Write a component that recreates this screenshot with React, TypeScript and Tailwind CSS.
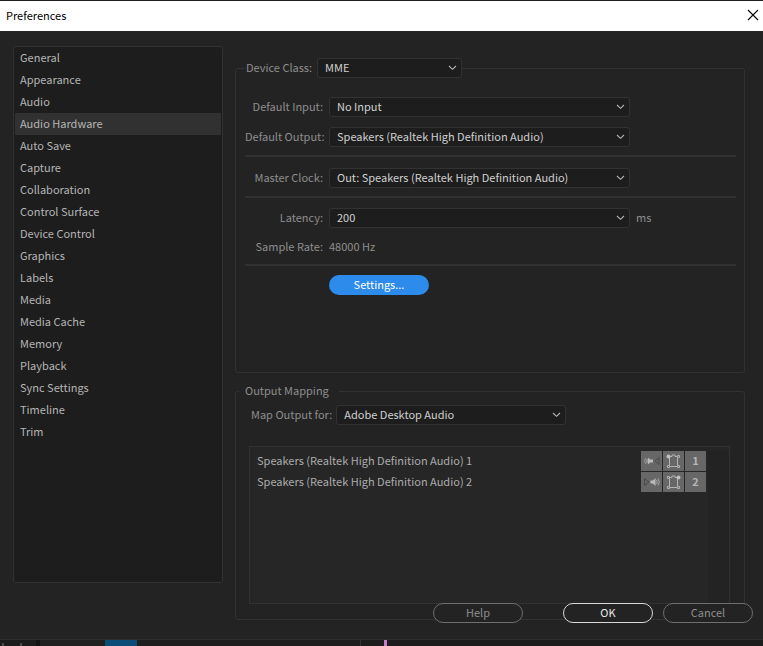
import type { ReactNode } from "react";

const sections = [
  "General",
  "Appearance",
  "Audio",
  "Audio Hardware",
  "Auto Save",
  "Capture",
  "Collaboration",
  "Control Surface",
  "Device Control",
  "Graphics",
  "Labels",
  "Media",
  "Media Cache",
  "Memory",
  "Playback",
  "Sync Settings",
  "Timeline",
  "Trim",
];

const outputs = [
  { channel: 1, side: "left", name: "Speakers (Realtek High Definition Audio) 1" },
  { channel: 2, side: "right", name: "Speakers (Realtek High Definition Audio) 2" },
];

const Dropdown = ({ id, value, className }: { id: string; value: string; className: string }) => (
  <div className={`relative h-5 ${className}`}>
    <select
      id={id}
      className="block h-5 w-full appearance-none rounded-[3px] border border-[#323232] bg-[#1d1d1d] pb-0.5 pl-[7px] pr-6 leading-4 text-[#d0d0d0] outline-none"
    >
      <option>{value}</option>
    </select>
    <svg
      viewBox="0 0 9 6"
      className="pointer-events-none absolute right-[5px] top-[7px] h-[6px] w-[9px]"
      fill="none"
      stroke="#b4b4b4"
      strokeWidth="1.1"
    >
      <path d="M1 1 L4.5 4.3 L8 1" />
    </svg>
  </div>
);

const Row = ({ label, htmlFor, children }: { label: string; htmlFor?: string; children: ReactNode }) => (
  <div className="flex h-5 items-center gap-1.5">
    <label htmlFor={htmlFor} className="w-[78px] shrink-0 whitespace-nowrap pb-0.5 text-right">
      {label}
    </label>
    {children}
  </div>
);

const Divider = () => <hr className="h-0.5 border-0 bg-[#313131]" />;

const SpeakerIcon = ({ side }: { side: string }) =>
  side === "left" ? (
    <svg viewBox="0 0 21 20" className="h-5 w-[21px]">
      <path d="M5 7 Q2 10 5 13" stroke="#9a9a9a" fill="none" />
      <path d="M5 8h2v4H5z" fill="#8c8c8c" />
      <path d="M7 6.5 L9 8.5 H12 V11.5 H9 L7 13.5z" fill="#bcbcbc" />
      <path d="M18 6.5 L14 10 L18 13.5z" stroke="#4a4a4a" fill="none" />
    </svg>
  ) : (
    <svg viewBox="0 0 21 20" className="h-5 w-[21px]">
      <path d="M3.5 6.5 V13.5 L8 10z" stroke="#4a4a4a" fill="none" />
      <path d="M9.5 8.5 H12 L14.5 6 V14 L12 11.5 H9.5z" fill="#bcbcbc" />
      <path d="M15.5 8 Q17 10 15.5 12 M17 6.5 Q19.5 10 17 13.5" stroke="#a8a8a8" fill="none" />
    </svg>
  );

// Surround layout: square with speaker dots, the assigned one is filled larger
const SurroundIcon = ({ side }: { side: string }) => (
  <svg viewBox="0 0 21 20" className="h-5 w-[21px]" fill="none" stroke="#b2b2b2">
    <path d="M6.5 7 V14 M14.5 7 V14 M7 15.5 H14 M7 5.5 H9 M12 5.5 H14" />
    <path d="M9 5.5 V4 H12 V5.5" />
    <path d="M4.5 14.5h2v2h-2z M14.5 14.5h2v2h-2z" />
    {side === "left" ? (
      <>
        <circle cx="5.5" cy="5.5" r="2" fill="#c0c0c0" stroke="none" />
        <path d="M14.5 4.5h2v2h-2z" />
      </>
    ) : (
      <>
        <circle cx="15.5" cy="5.5" r="2" fill="#c0c0c0" stroke="none" />
        <path d="M4.5 4.5h2v2h-2z" />
      </>
    )}
  </svg>
);

const App = () => (
  <div className="flex min-h-screen flex-col bg-[#232323] font-['Noto_Sans_CJK_SC','Noto_Sans',sans-serif] text-[11px] leading-4 text-[#8e8e8e]">
    <header className="flex h-[31px] items-center justify-between border-t border-[#231f20] bg-white pb-0.5 pl-1.5 pr-1 text-black">
      <h1>Preferences</h1>
      <button aria-label="Close" className="flex h-5 w-3 items-center justify-center">
        <svg viewBox="0 0 12 12" className="h-3 w-3" stroke="#000" strokeWidth="1.1">
          <path d="M1 1 L11 11 M11 1 L1 11" />
        </svg>
      </button>
    </header>

    <main className="flex flex-1 gap-3 pl-[13px] pr-[18px] pt-3">
      <nav className="mb-[37px] mt-[3px] w-[210px] shrink-0 rounded-[3px] border border-[#323232] bg-[#1d1d1d]">
        <ul>
          {sections.map((name) => (
            <li key={name} className="px-px">
              <a
                href="#"
                className={`block h-[22px] pl-[5px] leading-5 text-[#b5b5b5] ${
                  name === "Audio Hardware" ? "bg-[#313131]" : ""
                }`}
              >
                {name}
              </a>
            </li>
          ))}
        </ul>
      </nav>

      <div className="flex min-w-0 flex-1 flex-col pt-[15px]">
        <fieldset className="h-[315px] rounded-[3px] border border-[#323232] pl-[9px] pr-2">
          <legend className="flex h-5 items-center gap-[5px] pl-px">
            <label htmlFor="device-class" className="pb-0.5">
              Device Class:
            </label>
            <Dropdown id="device-class" value="MME" className="w-[145px]" />
          </legend>
          <div className="flex flex-col gap-2.5 pt-[19px]">
            <Row label="Default Input:" htmlFor="input">
              <Dropdown id="input" value="No Input" className="w-[301px]" />
            </Row>
            <Row label="Default Output:" htmlFor="output">
              <Dropdown id="output" value="Speakers (Realtek High Definition Audio)" className="w-[301px]" />
            </Row>
          </div>
          <div className="pt-2">
            <Divider />
          </div>
          <div className="pb-2 pt-[11px]">
            <Row label="Master Clock:" htmlFor="clock">
              <Dropdown id="clock" value="Out: Speakers (Realtek High Definition Audio)" className="w-[301px]" />
            </Row>
          </div>
          <Divider />
          <div className="flex flex-col gap-[9px] pb-[7px] pt-2.5">
            <Row label="Latency:" htmlFor="latency">
              <Dropdown id="latency" value="200" className="w-[301px]" />
              <span className="pb-0.5">ms</span>
            </Row>
            <Row label="Sample Rate:">
              <span className="pb-0.5">48000 Hz</span>
            </Row>
          </div>
          <Divider />
          <button className="ml-[84px] mt-[9px] block h-5 w-[100px] rounded-full bg-[#2d8ceb] pb-0.5 leading-4 text-white">
            Settings...
          </button>
        </fieldset>

        <fieldset className="mt-2 flex-1 rounded-[3px] border border-[#323232] pl-[13px] pr-3.5">
          <legend className="-ml-2.5 h-5 pl-1.5 pr-2.5 leading-[18px]">Output Mapping</legend>
          <div className="mt-1 flex h-5 items-center gap-1 pl-0.5">
            <label htmlFor="map-output" className="pb-0.5">
              Map Output for:
            </label>
            <Dropdown id="map-output" value="Adobe Desktop Audio" className="w-[230px]" />
          </div>
          <div className="mb-[15px] mt-[21px] flex h-[158px] border border-[#323232] bg-[#262626]">
            <div className="flex-1 pl-[7px] pt-[3px]">
              <table className="w-full border-collapse text-[#acacac]">
                <tbody>
                  {outputs.map(({ channel, side, name }) => (
                    <tr key={channel} className="h-[21px]">
                      <td className="p-0 pb-0.5">{name}</td>
                      <td className="w-[22px] p-0">
                        <div className="h-5 w-[21px] bg-[#676767]">
                          <SpeakerIcon side={side} />
                        </div>
                      </td>
                      <td className="w-[22px] p-0">
                        <div className="h-5 w-[21px] bg-[#676767]">
                          <SurroundIcon side={side} />
                        </div>
                      </td>
                      <td className="w-[23px] p-0">
                        <div className="h-5 w-[21px] bg-[#676767] text-center font-bold leading-[18px] text-[#b5b5b5]">
                          {channel}
                        </div>
                      </td>
                    </tr>
                  ))}
                </tbody>
              </table>
            </div>
            <div className="mt-1 w-[21px] bg-[#232323]" />
          </div>
        </fieldset>
      </div>
    </main>

    <footer className="relative -mt-[17px] flex justify-end pb-4 pr-2.5">
      <button className="mr-10 h-5 w-[90px] rounded-full border border-[#6e6e6e] bg-[#232323] pb-0.5 leading-4">
        Help
      </button>
      <button className="mr-2.5 h-5 w-[90px] rounded-full border border-[#d8d8d8] bg-[#232323] pb-0.5 leading-4 text-[#e8e8e8]">
        OK
      </button>
      <button className="h-5 w-[90px] rounded-full border border-[#6e6e6e] bg-[#232323] pb-0.5 leading-4">
        Cancel
      </button>
    </footer>

    {/* sliver of the timeline behind the dialog */}
    <div className="flex h-2 border-t border-[#2e2e2e] bg-[#1c1c1c]">
      <div className="flex w-9 items-end gap-4 pl-0.5">
        <span className="h-1 w-0.5 bg-[#4a4a4a]" />
        <span className="h-1 w-0.5 bg-[#4a4a4a]" />
      </div>
      <div className="w-1 bg-[#121212]" />
      <div className="w-[65px] bg-[#202020]" />
      <div className="w-8 bg-[#0a4d78]" />
      <div className="w-[224px] border-r border-[#333333] bg-[#1e1e1e]" />
      <div className="w-[23px]" />
      <div className="w-[3px] bg-[#c77bc9]" />
    </div>
  </div>
);

export default App;
